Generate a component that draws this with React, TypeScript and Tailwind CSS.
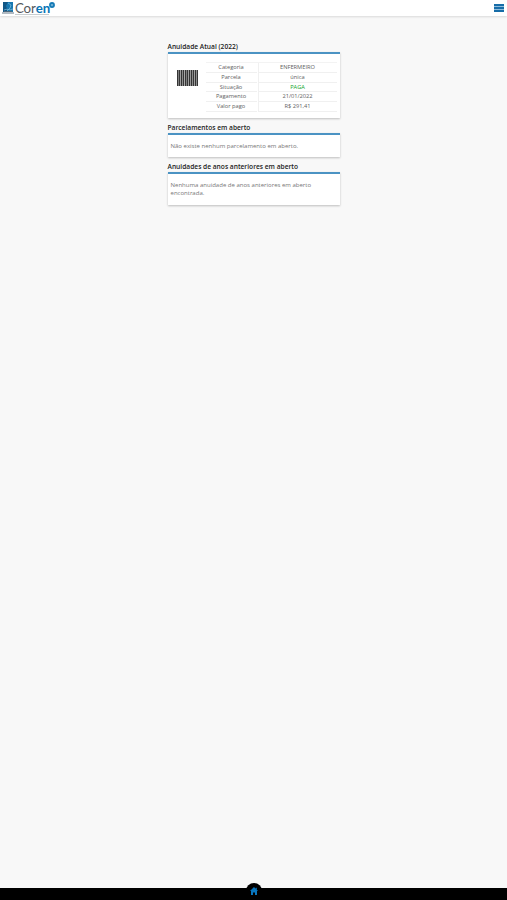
import type { ReactNode } from "react";

const rows = [
  { label: "Categoria", value: "ENFERMEIRO" },
  { label: "Parcela", value: "única" },
  { label: "Situação", value: "PAGA", paid: true },
  { label: "Pagamento", value: "21/01/2022" },
  { label: "Valor pago", value: "R$ 291,41" },
];

function Logo() {
  return (
    <div className="flex h-4 items-start">
      <svg className="mt-[1px] h-[14px] w-3 shrink-0" viewBox="0 0 12 14">
        <rect x="1" y="1" width="10" height="10" fill="#1878b0" />
        <path d="M1 1h5l-2 4 2 5-5 1z" fill="#125785" />
        <path d="M6 2l3 2-1 3-3 3M2 9c3-2 5 1 9-1" fill="none" stroke="#83c1e1" strokeWidth=".7" />
        <path d="M0 12h12M2 10.5h8" stroke="#526878" strokeWidth=".9" />
      </svg>
      <div className="w-[35px] pl-px">
        <div className="font-['Lato','Open_Sans',sans-serif] text-[13.3px] leading-[16px] tracking-[-0.15px] whitespace-nowrap text-[#55595c]">
          Cor<span className="font-bold text-[#0874b5]">en</span>
        </div>
        <div className="-mt-[2px] h-px bg-[#c7cdd0]" />
      </div>
      <svg className="mt-[2px] size-[6px] shrink-0" viewBox="0 0 7 7">
        <circle cx="3.5" cy="3.5" r="3.4" fill="#1479b5" />
        <path d="M2.2 3h2.6M2.2 4.2h2.6" stroke="#c9e5f5" strokeWidth=".6" />
      </svg>
    </div>
  );
}

function Barcode() {
  return (
    <svg className="h-4 w-[21px]" viewBox="0 0 21 16">
      <rect width="21" height="16" fill="#a8a8a8" />
      <path d="M.6 0v16M2.4 0v16M4.5 0v16M6.4 0v16M8.6 0v16M10.4 0v16M12.5 0v16M14.5 0v16M16.4 0v16M18.5 0v16M20.4 0v16" stroke="#333" strokeWidth="1.15" />
    </svg>
  );
}

function Section({ title, className, children }: { title: string; className: string; children: ReactNode }) {
  return (
    <section>
      <h2 className="h-3 pt-px text-[6.65px] leading-3 font-semibold whitespace-nowrap text-[#1c1c1c]">{title}</h2>
      <div className={"border-t-2 border-[#4b93c3] bg-white shadow-[0_1px_2px_rgba(0,0,0,0.24)] " + className}>
        {children}
      </div>
    </section>
  );
}

export default function App() {
  return (
    <div className="flex h-[900px] w-[507px] flex-col overflow-hidden bg-[#f8f8f8] font-['Open_Sans','Noto_Sans',sans-serif]">
      <header className="flex h-4 shrink-0 items-start justify-between bg-white pr-[3px] pl-[2px] shadow-[0_1px_2px_rgba(0,0,0,0.12)]">
        <Logo />
        <div className="mt-1 flex w-[10px] flex-col gap-px bg-[#8fbcdb]">
          <div className="h-[2px] bg-[#176da8]" />
          <div className="h-[2px] bg-[#176da8]" />
          <div className="h-[2px] bg-[#176da8]" />
        </div>
      </header>
      <main className="mx-auto w-[172px] flex-1 pt-6">
        <Section title="Anuidade Atual (2022)" className="mb-[3px] flex h-[66px] pt-2 pr-[3px] pl-[9px]">
          <div className="mt-2 w-[29px]">
            <Barcode />
          </div>
          <div className="flex h-[50px] flex-1 flex-col border-t border-[#f3f3f3]">
            {rows.map((row) => (
              <div key={row.label} className="flex h-[9.8px] gap-px text-center text-[5.7px] leading-[9px] text-[#616161]">
                <div className="w-[51px] border-b border-[#f0f0f0]">{row.label}</div>
                <div className={"flex-1 border-b border-l border-[#f0f0f0] " + (row.paid ? "text-[#12a52b]" : "")}>{row.value}</div>
              </div>
            ))}
          </div>
        </Section>
        <Section title="Parcelamentos em aberto" className="mb-[3px] h-6 px-[3px] pt-[7px]">
          <p className="text-[6.02px] leading-[9px] whitespace-nowrap text-[#777]">Não existe nenhum parcelamento em aberto.</p>
        </Section>
        <Section title="Anuidades de anos anteriores em aberto" className="h-[33px] px-[3px] pt-[7px]">
          <p className="text-[6.02px] leading-[8px] whitespace-nowrap text-[#777]">
            Nenhuma anuidade de anos anteriores em aberto
            <br />
            encontrada.
          </p>
        </Section>
      </main>
      <footer className="relative h-3 shrink-0 bg-black">
        <div className="absolute -top-[5px] left-[246px] flex size-4 items-center justify-center rounded-full bg-black">
          <svg className="size-[8px]" viewBox="0 0 8 8" fill="#0875bd">
            <path d="M4 0L0 4h1v4h2V5.6h2V8h2V4h1L6.8 2.8V.8H5.7v.9z" />
          </svg>
        </div>
      </footer>
    </div>
  );
}
